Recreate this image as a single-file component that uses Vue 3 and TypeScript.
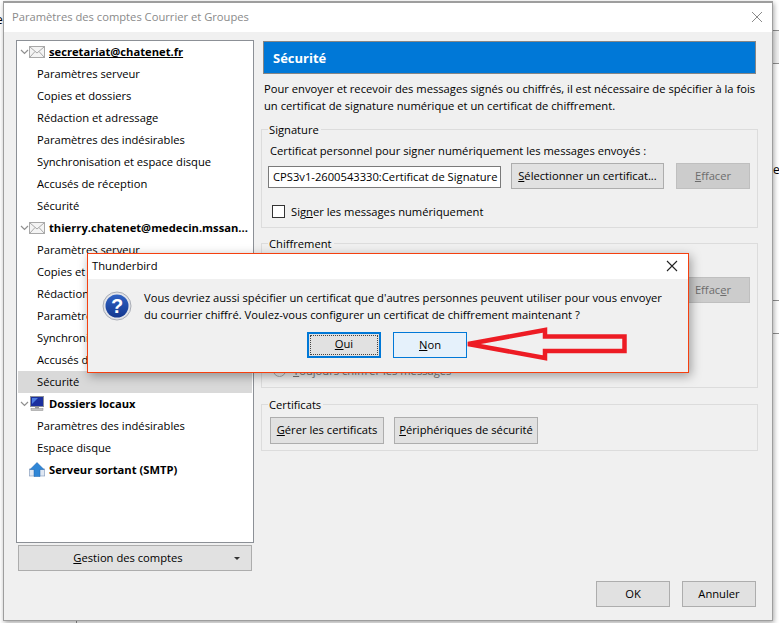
<script setup lang="ts">
const account1 = ['Paramètres serveur', 'Copies et dossiers', 'Rédaction et adressage', 'Paramètres des indésirables', 'Synchronisation et espace disque', 'Accusés de réception', 'Sécurité']
</script>

<template>
  <div class="desk">
    <span class="bit bit-l">e</span>
    <span class="bit bit-r">e</span>
    <div class="strip s1"></div>
    <div class="strip s2"></div>
    <div class="strip s3"></div>
    <div class="strip s4"></div>
    <div class="window">
      <div class="titlebar">
        <span class="title">Paramètres des comptes Courrier et Groupes</span>
        <svg class="close" width="12" height="12" viewBox="0 0 12 12"><path d="M1 1l10 10M11 1L1 11" stroke="#8a8a8a" stroke-width="1" fill="none" /></svg>
      </div>
      <div class="client">
        <div class="left">
          <div class="tree">
            <div class="row head">
              <svg class="tw" width="9" height="6" viewBox="0 0 9 6"><path d="M1 1l3.5 3.5L8 1" stroke="#8f8f8f" fill="none" stroke-width="1.2" /></svg>
              <svg class="ico" width="16" height="12" viewBox="0 0 16 12"><rect x=".5" y=".5" width="15" height="11" fill="#f4f4f4" stroke="#a8a8a8" /><path d="M1 1l7 6 7-6M1 11l5-5.5M15 11l-5-5.5" stroke="#a8a8a8" fill="none" /></svg>
              <span class="focus">secretariat@chatenet.fr</span>
            </div>
            <div v-for="i in account1" :key="'a' + i" class="row sub">{{ i }}</div>
            <div class="row head">
              <svg class="tw" width="9" height="6" viewBox="0 0 9 6"><path d="M1 1l3.5 3.5L8 1" stroke="#8f8f8f" fill="none" stroke-width="1.2" /></svg>
              <svg class="ico" width="16" height="12" viewBox="0 0 16 12"><rect x=".5" y=".5" width="15" height="11" fill="#f4f4f4" stroke="#a8a8a8" /><path d="M1 1l7 6 7-6M1 11l5-5.5M15 11l-5-5.5" stroke="#a8a8a8" fill="none" /></svg>
              <span>thierry.chatenet@medecin.mssan...</span>
            </div>
            <div v-for="(i, n) in account1" :key="'b' + i" class="row sub" :class="{ sel: n === 6 }">{{ i }}</div>
            <div class="row head">
              <svg class="tw" width="9" height="6" viewBox="0 0 9 6"><path d="M1 1l3.5 3.5L8 1" stroke="#8f8f8f" fill="none" stroke-width="1.2" /></svg>
              <svg class="ico" width="16" height="15" viewBox="0 0 16 15"><rect x="1.5" y=".5" width="13" height="10" fill="#1b2f9e" stroke="#8b8f98" /><path d="M3 2h6l-6 6z" fill="#4d7de0" /><rect x="6" y="11" width="4" height="1.5" fill="#9a9a9a" /><rect x="2" y="12.5" width="12" height="2" fill="#c4c4c4" stroke="#8b8b8b" stroke-width=".5" /></svg>
              <span>Dossiers locaux</span>
            </div>
            <div class="row sub">Paramètres des indésirables</div>
            <div class="row sub">Espace disque</div>
            <div class="row head">
              <span class="tw-space"></span>
              <svg class="ico" width="16" height="15" viewBox="0 0 16 15"><rect x=".3" y="7" width="5" height="7" fill="#dfe7f2" stroke="#7f97b8" stroke-width=".6" /><rect x="10.7" y="7" width="5" height="7" fill="#dfe7f2" stroke="#7f97b8" stroke-width=".6" /><path d="M8 .5l7 7h-4v7H5v-7H1z" fill="#2f86d6" stroke="#1c62ad" stroke-width=".5" /></svg>
              <span>Serveur sortant (SMTP)</span>
            </div>
          </div>
          <button class="btn manage"><span class="manage-label"><u>G</u>estion des comptes</span><span class="caret"></span></button>
        </div>
        <div class="right">
          <div class="banner">Sécurité</div>
          <p class="intro">Pour envoyer et recevoir des messages signés ou chiffrés, il est nécessaire de spécifier à la fois un certificat de signature numérique et un certificat de chiffrement.</p>
          <fieldset class="group sig">
            <legend>Signature</legend>
            <div class="line">Certificat personnel pour signer numériquement les messages envoyés :</div>
            <div class="cert-row">
              <div class="input">CPS3v1-2600543330:Certificat de Signature</div>
              <button class="btn select"><u>S</u>électionner un certificat...</button>
              <button class="btn clear"><u>E</u>ffacer</button>
            </div>
            <label class="check"><span class="box"></span>Sig<u>n</u>er les messages numériquement</label>
          </fieldset>
          <fieldset class="group enc">
            <legend>Chiffrement</legend>
            <div class="cert-row enc-row">
              <div class="input"></div>
              <button class="btn select"></button>
              <button class="btn clear">Effac<u>e</u>r</button>
            </div>
            <label class="radio"><span class="dot"></span><u>T</u>oujours chiffrer les messages</label>
          </fieldset>
          <fieldset class="group certs">
            <legend>Certificats</legend>
            <div class="cert-buttons">
              <button class="btn manage-cert"><u>G</u>érer les certificats</button>
              <button class="btn devices"><u>P</u>ériphériques de sécurité</button>
            </div>
          </fieldset>
          <div class="footer">
            <button class="btn foot">OK</button>
            <button class="btn foot">Annuler</button>
          </div>
        </div>
      </div>

      <div class="dialog">
        <div class="d-title">
          <span>Thunderbird</span>
          <svg width="12" height="12" viewBox="0 0 12 12"><path d="M1 1l10 10M11 1L1 11" stroke="#222" stroke-width="1.1" fill="none" /></svg>
        </div>
        <div class="d-body">
          <div class="d-msg">
            <svg class="q" width="30" height="30" viewBox="0 0 30 30">
              <defs>
                <linearGradient id="qg" x1="0" y1="0" x2="0" y2="1"><stop offset="0" stop-color="#2f62c4" /><stop offset="1" stop-color="#14388f" /></linearGradient>
              </defs>
              <circle cx="15" cy="15" r="14" fill="#e2e4e9" stroke="#a9adb6" />
              <circle cx="15" cy="15" r="11.5" fill="url(#qg)" />
              <text x="15" y="22" text-anchor="middle" class="qm">?</text>
            </svg>
            <p>Vous devriez aussi spécifier un certificat que d'autres personnes peuvent utiliser pour vous envoyer du courrier chiffré. Voulez-vous configurer un certificat de chiffrement maintenant ?</p>
          </div>
          <div class="d-actions">
            <button class="btn yes"><span class="dots"><u>O</u>ui</span></button>
            <button class="btn no"><u>N</u>on</button>
          </div>
        </div>
      </div>

      <svg class="arrow" width="170" height="40" viewBox="0 0 170 40">
        <path d="M5 18 L82 4 L82 10.5 L161.5 10.5 L161.5 25 L82 25 L82 32 Z" fill="none" stroke="#ed1c24" stroke-width="4.5" stroke-linejoin="miter" />
      </svg>
    </div>
  </div>
</template>

<style scoped>
.desk {
  position: relative;
  width: 779px;
  height: 623px;
  background: #fff;
  overflow: hidden;
  padding: 1px 0 0 3px;
  box-sizing: border-box;
  font-family: "Open Sans", "Noto Sans", sans-serif;
  font-size: 11.2px;
  color: #000;
}
.bit { position: absolute; font-size: 12px; line-height: 14px; }
.bit-l { left: -4px; top: 13px; }
.bit-r { left: 773px; top: 163px; }
.strip { position: absolute; left: 773px; width: 6px; height: 1px; background: #8f8f8f; }
.s1 { top: 30px; height: 34px; background: #f0f0f0; border-top: 1px solid #8f8f8f; border-bottom: 1px solid #8f8f8f; box-sizing: border-box; }
.s3 { top: 300px; }
.s4 { top: 333px; }
.s2 { left: 76px; top: 620px; width: 1px; height: 3px; }
.window {
  position: relative;
  width: 770px;
  height: 620px;
  box-sizing: border-box;
  border: 1px solid #9e9e9e;
  border-top-width: 2px;
  box-shadow: 1px 2px 5px rgba(0, 0, 0, .35);
  display: flex;
  flex-direction: column;
  background: #f0f0f0;
}
.titlebar {
  height: 29px;
  box-sizing: border-box;
  background: #fff;
  display: flex;
  align-items: center;
  justify-content: space-between;
  padding: 0 9px 2px 8px;
  flex: none;
}
.title { color: #8a8a8a; }
.client {
  flex: 1;
  display: flex;
  padding: 8px 14px 0 12px;
  gap: 7px;
}
.left { width: 238px; flex: none; }
.tree {
  height: 503px;
  box-sizing: border-box;
  background: #fff;
  border: 1px solid #8c9096;
  overflow: hidden;
}
.row {
  height: 22px;
  box-sizing: border-box;
  padding-bottom: 1px;
  display: flex;
  align-items: center;
  white-space: nowrap;
}
.head { font-weight: 700; padding-left: 3px; }
.sub { padding-left: 20px; }
.sel { background: #d9d9d9; margin: 0 0 0 1px; padding-left: 19px; width: 234px; }
.tw { flex: none; }
.tw-space { width: 9px; flex: none; }
.ico { flex: none; margin-right: 4px; }
.focus { text-decoration: underline; }
.btn {
  font: inherit;
  color: #000;
  background: #e1e1e1;
  border: 1px solid #adadad;
  padding: 0 0 2px;
  border-radius: 0;
  box-sizing: border-box;
  height: 26px;
  white-space: nowrap;
}
.manage {
  width: 234px;
  margin: 2px 0 0 2px;
  display: flex;
  align-items: center;
  position: relative;
  justify-content: center;
  padding-right: 14px;
}
.caret {
  position: absolute;
  right: 11px;
  top: 11px;
  border: 3px solid transparent;
  border-top-color: #333;
  border-bottom-width: 0;
}
.right { flex: 1; min-width: 0; display: flex; flex-direction: column; }
.banner {
  height: 33px;
  box-sizing: border-box;
  margin: 1px 2px 0 2px;
  background: #0078d7;
  border: 1px solid #868686;
  color: #fff;
  font-weight: 700;
  font-size: 13px;
  display: flex;
  align-items: center;
  padding-left: 9px;
  flex: none;
}
.intro {
  margin: 6px 0 0 3px;
  width: 494px;
  line-height: 17px;
}
.group {
  margin: 7px 0 0;
  border: 1px solid #dcdcdc;
  padding: 0 6px;
  box-sizing: border-box;
  width: 497px;
  min-width: 0;
  flex: none;
}
.group legend {
  padding: 0 2px 0 1px;
  line-height: 17px;
}
.sig { height: 107px; }
.line { margin: 4px 0 0 2px; line-height: 17px; }
.cert-row { display: flex; align-items: center; margin-top: 4px; }
.enc-row { margin-top: 25px; }
.input {
  width: 233px;
  height: 22px;
  box-sizing: border-box;
  background: #fff;
  border: 1px solid #7a7a7a;
  padding-left: 4px;
  line-height: 20px;
  overflow: hidden;
  white-space: nowrap;
  flex: none;
  margin-top: 1px;
}
.select { width: 153px; margin-left: 10px; flex: none; }
.clear { width: 74px; margin-left: 12px; flex: none; background: #ccc; border-color: #bfbfbf; color: #6d6d6d; }
.check { display: flex; align-items: center; margin: 13px 0 0 4px; height: 18px; }
.box {
  width: 13px;
  height: 13px;
  box-sizing: border-box;
  background: #fff;
  border: 1px solid #333;
  margin-right: 6px;
}
.enc { height: 153px; }
.radio { display: flex; align-items: center; height: 21px; margin: 57px 0 0 5px; color: #777; }
.dot {
  width: 13px;
  height: 13px;
  box-sizing: border-box;
  background: #f0f0f0;
  border: 1px solid #aaa;
  border-radius: 50%;
  margin-right: 7px;
}
.certs { height: 55px; margin-top: 8px; }
.cert-buttons { display: flex; gap: 10px; margin: 4px 0 0 2px; }
.manage-cert { width: 114px; height: 27px; }
.devices { width: 144px; height: 27px; }
.footer {
  margin-top: auto;
  display: flex;
  justify-content: flex-end;
  gap: 12px;
  padding: 0 2px 13px 0;
}
.foot { width: 74px; }

.dialog {
  position: absolute;
  left: 83px;
  top: 250px;
  width: 602px;
  height: 120px;
  box-sizing: border-box;
  border: 1px solid #f5400f;
  background: #f0f0f0;
  box-shadow: 2px 3px 10px rgba(0, 0, 0, .35);
  display: flex;
  flex-direction: column;
}
.d-title {
  height: 25px;
  box-sizing: border-box;
  flex: none;
  background: #fff;
  display: flex;
  align-items: center;
  justify-content: space-between;
  padding: 0 10px 2px 4px;
}
.d-body { flex: 1; display: flex; flex-direction: column; }
.d-msg { display: flex; padding: 9px 20px 0 14px; }
.q { flex: none; margin: 3px 12px 0 0; }
.qm { font: 700 20px "Liberation Sans", sans-serif; fill: #fff; }
.d-msg p { margin: 0; line-height: 17px; padding-top: 1px; }
.d-actions { display: flex; justify-content: center; gap: 12px; margin-top: 9px; margin-left: -2px; }
.yes {
  width: 74px;
  height: 26px;
  border: 2px solid #0078d7;
  padding: 1px;
}
.dots {
  display: block;
  height: 100%;
  border: 1px dotted #444;
  box-sizing: border-box;
  line-height: 16px;
}
.no {
  width: 74px;
  height: 26px;
  background: #e5f1fb;
  border-color: #0078d7;
}
.arrow {
  position: absolute;
  left: 459px;
  top: 323px;
  pointer-events: none;
}
</style>

<style>
html, body { margin: 0; background: #fff; }
</style>
